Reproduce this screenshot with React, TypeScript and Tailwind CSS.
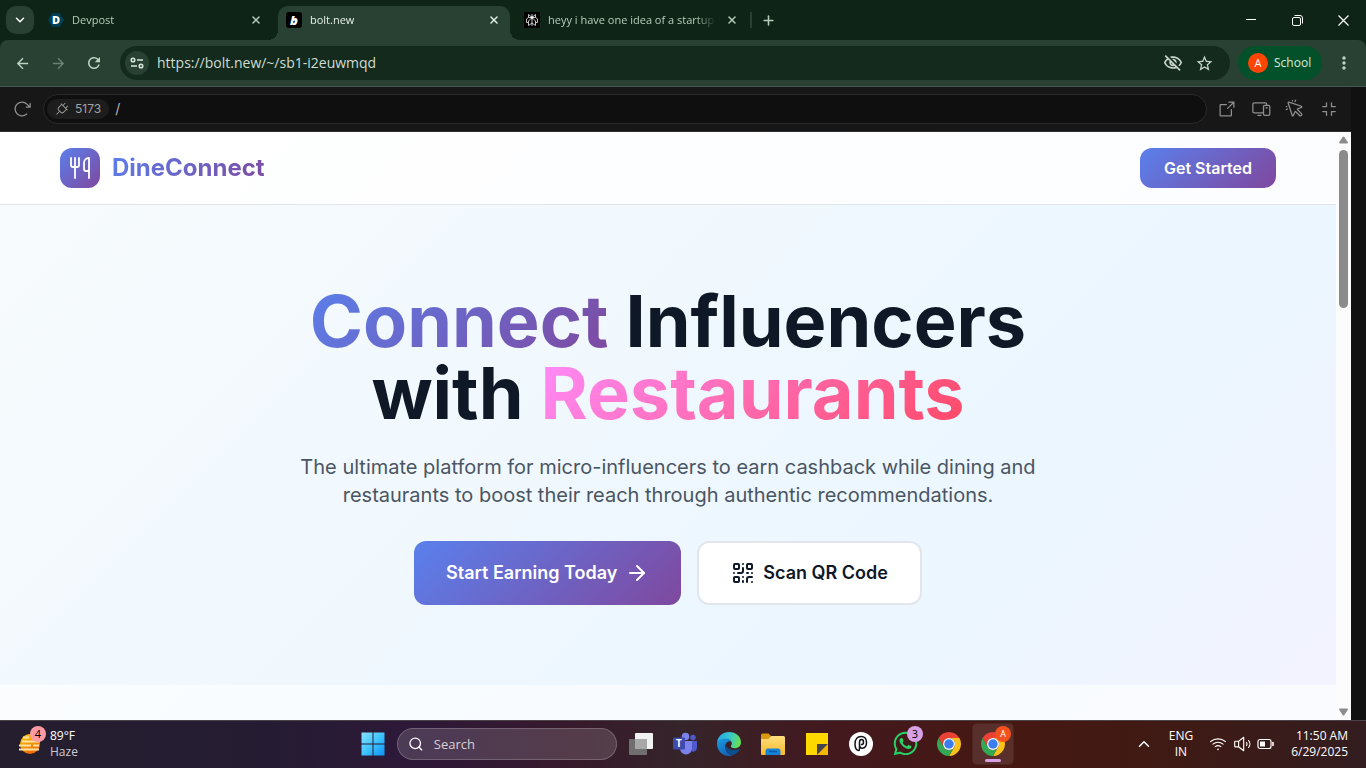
import { useState, type ReactNode } from 'react'
import clsx from 'clsx'
import { ArrowRight, ChevronDown, ChevronUp, Plus, QrCode, Search, Utensils, X } from 'lucide-react'
import {
  MdArrowBack,
  MdArrowForward,
  MdMoreVert,
  MdOutlineVisibilityOff,
  MdRefresh,
  MdStarBorder
} from 'react-icons/md'
import {
  PiArrowClockwise,
  PiArrowSquareOut,
  PiCornersIn,
  PiCursorClick,
  PiDevices,
  PiPlug,
  PiSpeakerHigh,
  PiWifiHigh
} from 'react-icons/pi'
import { FaWhatsapp } from 'react-icons/fa'

interface Tab {
  id: string
  title: string
  icon: ReactNode
}

const tabs: Tab[] = [
  { id: 'devpost', title: 'Devpost', icon: <DevpostIcon /> },
  { id: 'bolt', title: 'bolt.new', icon: <BoltIcon /> },
  { id: 'chat', title: 'heyy i have one idea of a startup', icon: <ChatIcon /> }
]

export default function App() {
  return (
    <div className="flex min-h-screen flex-col bg-[#111111] font-['Open_Sans','Noto_Sans',sans-serif]">
      <TabStrip />
      <Toolbar />
      <main className="flex flex-1">
        <div className="flex min-w-0 flex-1 flex-col">
          <PreviewBar />
          <div className="flex flex-1">
            <DineConnectPage />
            <Scrollbar />
          </div>
        </div>
        <div className="w-[15px] bg-[#111111]" />
      </main>
      <Taskbar />
    </div>
  )
}

// ============================================================================
// BROWSER
// ============================================================================

function TabStrip() {
  const [active, setActive] = useState('bolt')

  return (
    <header className="flex h-10 bg-[#0e2417] text-[11px] text-[#b5ccba]">
      <button
        aria-label="Search tabs"
        className="my-auto ml-1.5 flex size-7 items-center justify-center rounded-[10px] bg-[#294132] text-white"
      >
        <ChevronDown size={14} strokeWidth={2.5} />
      </button>

      <div className="flex gap-1.5 pl-1.5">
        {tabs.map((tab) => {
          const isActive = tab.id === active
          return (
            <div
              key={tab.id}
              className={clsx(
                'relative mt-1.5 flex w-[232px] items-center rounded-t-[10px] px-2 pb-1.5',
                isActive && 'bg-[#294132] text-[#e3f0e6]'
              )}
            >
              {isActive && (
                <>
                  <span className="absolute bottom-0 -left-2.5 size-2.5 bg-[radial-gradient(circle_at_0_0,#0e2417_10px,#294132_10px)]" />
                  <span className="absolute -right-2.5 bottom-0 size-2.5 bg-[radial-gradient(circle_at_100%_0,#0e2417_10px,#294132_10px)]" />
                </>
              )}
              <button
                onClick={() => setActive(tab.id)}
                className="flex min-w-0 flex-1 items-center gap-2 text-left"
              >
                {tab.icon}
                <span className="flex-1 overflow-hidden whitespace-nowrap [mask-image:linear-gradient(to_right,black_88%,transparent)]">
                  {tab.title}
                </span>
              </button>
              <button aria-label={`Close ${tab.title}`} className="ml-2 flex size-4 items-center justify-center">
                <X size={12} strokeWidth={3} />
              </button>
            </div>
          )
        })}
      </div>

      <div className="my-auto ml-0.5 h-4 w-0.5 bg-[#294132]" />
      <button aria-label="New tab" className="ml-1 flex w-6 items-center justify-center">
        <Plus size={15} strokeWidth={2.5} />
      </button>

      <div className="ml-auto flex text-white">
        <button aria-label="Minimize" className="flex w-[46px] items-center justify-center">
          <svg width="10" height="10" viewBox="0 0 10 10" stroke="currentColor">
            <path d="M0 4.5h10" />
          </svg>
        </button>
        <button aria-label="Restore" className="flex w-[46px] items-center justify-center">
          <svg width="11" height="11" viewBox="0 0 11 11" fill="none" stroke="currentColor">
            <rect x="0.5" y="2.5" width="8" height="8" rx="1.5" />
            <path d="M2.5 .5h5.5a2.5 2.5 0 0 1 2.5 2.5v5.5" />
          </svg>
        </button>
        <button aria-label="Close" className="flex w-[46px] items-center justify-center">
          <svg width="11" height="11" viewBox="0 0 11 11" stroke="currentColor" strokeWidth="1.2">
            <path d="M.5 .5l10 10M10.5 .5l-10 10" />
          </svg>
        </button>
      </div>
    </header>
  )
}

function Toolbar() {
  return (
    <div className="bg-[#0e2417]">
      <nav className="flex h-[47px] items-center rounded-t-lg border-b border-[#43594b] bg-[#294132] pl-1 text-[#bdd3c2]">
        <ToolbarButton label="Back">
          <MdArrowBack size={17} />
        </ToolbarButton>
        <ToolbarButton label="Forward" disabled>
          <MdArrowForward size={17} />
        </ToolbarButton>
        <ToolbarButton label="Reload">
          <MdRefresh size={18} />
        </ToolbarButton>

        <div className="ml-2 flex h-[34px] flex-1 items-center rounded-full bg-[#132a1d] pr-[15px] pl-[5px]">
          <button
            aria-label="Site information"
            className="flex size-6 items-center justify-center rounded-full bg-[#294132] text-[#dbe8de]"
          >
            <svg width="14" height="12" viewBox="0 0 14 12" fill="none" stroke="currentColor" strokeWidth="1.5">
              <circle cx="3" cy="3" r="1.8" />
              <path d="M7 3h6M1 9h6" />
              <circle cx="11" cy="9" r="1.8" />
            </svg>
          </button>
          <input
            aria-label="Address"
            defaultValue="https://bolt.new/~/sb1-i2euwmqd"
            className="ml-2 min-w-0 flex-1 bg-transparent text-sm text-[#cfdcd2] outline-none"
          />
          <div className="flex gap-3 text-[#c5d2c8]">
            <button aria-label="Third-party cookies blocked">
              <MdOutlineVisibilityOff size={20} />
            </button>
            <button aria-label="Bookmark this tab" className="w-5">
              <MdStarBorder size={19} />
            </button>
          </div>
        </div>

        <button className="ml-2 flex h-[34px] w-[84px] items-center gap-1.5 rounded-full bg-[#03512b] pl-2.5 text-xs text-[#d5ecd9]">
          <span className="flex size-5 items-center justify-center rounded-full bg-[#ff4500] text-[11px] text-white">
            A
          </span>
          School
        </button>
        <button aria-label="Menu" className="flex w-11 justify-center">
          <MdMoreVert size={20} />
        </button>
      </nav>
    </div>
  )
}

function ToolbarButton({
  label,
  disabled,
  children
}: {
  label: string
  disabled?: boolean
  children: ReactNode
}) {
  return (
    <button
      aria-label={label}
      disabled={disabled}
      className={clsx('flex h-9 w-9 items-center justify-center', disabled && 'text-[#6b8073]')}
    >
      {children}
    </button>
  )
}

function PreviewBar() {
  return (
    <div className="flex h-[45px] items-center border-b border-[#2e2e2e] bg-[#171717] pr-[5px] text-[#8f8f8f]">
      <button aria-label="Reload preview" className="flex w-[43px] justify-center">
        <PiArrowClockwise size={20} />
      </button>
      <div className="flex h-[30px] flex-1 items-center rounded-full border border-[#2a2a2a] bg-[#0f0f0f] pl-[3px]">
        <button className="flex h-5 items-center gap-1.5 rounded-full bg-[#1d1d1d] pr-2 pl-2 font-[Inter,sans-serif] text-xs text-[#a3a3a3]">
          <PiPlug size={14} />
          5173
        </button>
        <input
          aria-label="Preview path"
          defaultValue="/"
          className="ml-1.5 min-w-0 flex-1 bg-transparent font-[Inter,sans-serif] text-sm text-[#b5b5b5] outline-none"
        />
      </div>
      <div className="ml-[3px] flex">
        <PreviewAction label="Open in new tab">
          <PiArrowSquareOut size={20} />
        </PreviewAction>
        <PreviewAction label="Device size">
          <PiDevices size={20} />
        </PreviewAction>
        <PreviewAction label="Inspect element">
          <PiCursorClick size={20} />
        </PreviewAction>
        <PreviewAction label="Exit full screen">
          <PiCornersIn size={20} />
        </PreviewAction>
      </div>
    </div>
  )
}

function PreviewAction({ label, children }: { label: string; children: ReactNode }) {
  return (
    <button aria-label={label} className="flex w-[34px] justify-center">
      {children}
    </button>
  )
}

function Scrollbar() {
  return (
    <div className="flex w-[15px] flex-col items-center bg-[#fcfcfc] py-1">
      <svg width="9" height="8" viewBox="0 0 9 8" fill="#8b8b8b">
        <path d="M3.700 1a1 1 0 0 1 1.600 0L9 6.500a1 1 0 0 1-1 1H1a1 1 0 0 1-1-1z" />
      </svg>
      <div className="mt-1.5 h-[158px] w-[9px] rounded-full bg-[#8b8b8b]" />
      <svg className="mt-auto" width="9" height="8" viewBox="0 0 9 8" fill="#8b8b8b">
        <path d="M5.300 7a1 1 0 0 1-1.600 0L0 1.500a1 1 0 0 1 1-1h7a1 1 0 0 1 1 1z" />
      </svg>
    </div>
  )
}

// ============================================================================
// DINECONNECT LANDING PAGE
// ============================================================================

function DineConnectPage() {
  return (
    <div className="flex-1 bg-[linear-gradient(135deg,#fefefe,#f8fcff_50%,#f9fbff)] font-[Inter,sans-serif]">
      <div className="border-b border-[#e2e6ec] bg-[linear-gradient(135deg,#ffffff,#fcfdff)]">
        <div className="mx-auto flex max-w-7xl items-center justify-between px-8 py-4">
          <a href="#" className="flex items-center gap-3">
            <span className="flex size-10 items-center justify-center rounded-xl bg-[linear-gradient(135deg,#5a80ec,#7f489e)] text-white">
              <Utensils size={24} strokeWidth={1.8} />
            </span>
            <span className="bg-[linear-gradient(135deg,#5a80ec,#7f489e)] bg-clip-text text-2xl font-bold text-transparent">
              DineConnect
            </span>
          </a>
          <button className="rounded-xl bg-[linear-gradient(135deg,#5a80ec,#7f489e)] px-6 py-2 font-semibold text-white">
            Get Started
          </button>
        </div>
      </div>

      <section className="bg-[linear-gradient(135deg,#f7fbfd,#ebf6ff_73%,#f3f3ff)] px-8 py-20 text-center">
        <h1 className="mx-auto mb-6 max-w-4xl text-[72px] leading-[72px] font-bold text-[#0f1826]">
          <span className="bg-[linear-gradient(135deg,#5a80ec,#7f489e)] bg-clip-text text-transparent">
            Connect
          </span>{' '}
          Influencers
          <br />
          with{' '}
          <span className="bg-[linear-gradient(135deg,#ff8cfb,#ff4864)] bg-clip-text text-transparent">
            Restaurants
          </span>
        </h1>
        <p className="mx-auto mb-8 max-w-3xl text-xl text-[#4a5563]">
          The ultimate platform for micro-influencers to earn cashback while dining and restaurants
          to boost their reach through authentic recommendations.
        </p>
        <div className="flex justify-center gap-4">
          <button className="flex items-center gap-2 rounded-xl bg-[linear-gradient(135deg,#5a80ec,#7f489e)] px-8 text-lg font-semibold text-white">
            Start Earning Today
            <ArrowRight size={24} />
          </button>
          <button className="flex items-center gap-2 rounded-xl border-2 border-[#e2e6ec] bg-white px-8 py-4 text-lg font-semibold text-[#0f1826]">
            <QrCode size={24} />
            Scan QR Code
          </button>
        </div>
      </section>
    </div>
  )
}

// ============================================================================
// TASKBAR
// ============================================================================

function Taskbar() {
  return (
    <footer className="flex h-12 items-center border-t border-[#4b4347] bg-[linear-gradient(to_right,#241e2e,#251c33_20%,#2e1838_31%,#371a2b_42%,#35242a_50%,#42191f_60%,#461812_74%,#3f1a14_86%,#331d20)] pb-0.5 text-xs leading-4 text-white">
      <div className="flex flex-1">
        <button className="ml-[18px] flex items-center gap-2 text-left">
          <span className="relative">
            <HazeIcon />
            <span className="absolute -top-1.5 -right-1 flex size-4 items-center justify-center rounded-full bg-[#ff99a4] text-[11px] text-black">
              4
            </span>
          </span>
          <span>
            <span className="block">89°F</span>
            <span className="block text-[#cfc9cf]">Haze</span>
          </span>
        </button>
      </div>

      <div className="flex items-center gap-1">
        <TaskbarItem label="Start">
          <StartIcon />
        </TaskbarItem>
        <label className="flex h-8 w-[220px] items-center gap-2.5 rounded-full border border-white/20 bg-white/15 pl-2.5">
          <Search size={18} strokeWidth={2} />
          <input
            aria-label="Search"
            placeholder="Search"
            className="w-full bg-transparent text-[13px] outline-none placeholder:text-[#d8d0d6]"
          />
        </label>
        <TaskbarItem label="Task view">
          <TaskViewIcon />
        </TaskbarItem>
        <TaskbarItem label="Teams">
          <TeamsIcon />
        </TaskbarItem>
        <TaskbarItem label="Edge">
          <EdgeIcon />
        </TaskbarItem>
        <TaskbarItem label="File Explorer">
          <FolderIcon />
        </TaskbarItem>
        <TaskbarItem label="Sticky Notes">
          <NotesIcon />
        </TaskbarItem>
        <TaskbarItem label="Pi">
          <PiAppIcon />
        </TaskbarItem>
        <TaskbarItem label="WhatsApp">
          <FaWhatsapp size={27} color="#25d366" />
          <span className="absolute top-0.5 right-0.5 flex size-4 items-center justify-center rounded-full bg-[#d9a0e6] text-[11px] text-black">
            3
          </span>
        </TaskbarItem>
        <TaskbarItem label="Chrome">
          <ChromeIcon />
        </TaskbarItem>
        <TaskbarItem label="Chrome, School profile" active>
          <ChromeIcon />
          <span className="absolute top-0.5 right-0.5 flex size-4 items-center justify-center rounded-full bg-[#f4511e] text-[9px] text-white">
            A
          </span>
        </TaskbarItem>
      </div>

      <div className="flex flex-1 items-center justify-end">
        <button aria-label="Show hidden icons" className="mr-4">
          <ChevronUp size={18} />
        </button>
        <button className="mr-4 text-center">
          ENG
          <br />
          IN
        </button>
        <button aria-label="Network, volume and battery" className="flex items-center gap-1.5">
          <PiWifiHigh size={18} />
          <PiSpeakerHigh size={18} />
          <svg width="18" height="12" viewBox="0 0 18 12" fill="none" stroke="white" strokeWidth="1.2">
            <rect x="1" y="1.500" width="13" height="9" rx="2" />
            <rect x="3" y="3.500" width="5" height="5" fill="white" stroke="none" />
            <path d="M16 4.500v3" strokeWidth="1.600" strokeLinecap="round" />
          </svg>
        </button>
        <button className="mr-[18px] ml-4 text-right">
          11:50 AM
          <br />
          6/29/2025
        </button>
      </div>
    </footer>
  )
}

function TaskbarItem({
  label,
  active,
  children
}: {
  label: string
  active?: boolean
  children: ReactNode
}) {
  return (
    <button
      aria-label={label}
      className={clsx(
        'relative flex size-10 items-center justify-center rounded',
        active && 'bg-white/10 ring-1 ring-white/5'
      )}
    >
      {children}
      {active && <span className="absolute bottom-0.5 h-[3px] w-4 rounded-full bg-[#d9a0e6]" />}
    </button>
  )
}

// ============================================================================
// ICONS
// ============================================================================

function DevpostIcon() {
  return (
    <svg width="16" height="16" viewBox="0 0 16 16">
      <path d="M4.200 1h7.600L16 8l-4.200 7H4.200L0 8z" fill="#003e54" />
      <text x="8" y="12" textAnchor="middle" fontSize="11" fontWeight="800" fill="white">
        D
      </text>
    </svg>
  )
}

function BoltIcon() {
  return (
    <svg width="16" height="16" viewBox="0 0 16 16">
      <rect width="16" height="16" rx="3" fill="black" />
      <text x="8" y="12.500" textAnchor="middle" fontSize="13" fontWeight="800" fontStyle="italic" fill="white">
        b
      </text>
    </svg>
  )
}

function ChatIcon() {
  return (
    <svg width="16" height="16" viewBox="0 0 16 16" fill="none" stroke="#d8d8d8" strokeWidth="0.900">
      <rect width="16" height="16" fill="black" stroke="none" />
      <path d="M8 2v12M4.500 2.500v3h7v-3L8 5.500zM4.500 5.500L2.500 7v3.500h2M11.500 5.500l2 1.500v3.500h-2M8 5.500L4.500 9v4.500L8 11l3.500 2.500V9z" />
      <circle cx="8" cy="5.500" r="1.200" fill="#ffffff" stroke="none" />
    </svg>
  )
}

function HazeIcon() {
  return (
    <svg width="24" height="24" viewBox="0 0 24 24">
      <defs>
        <linearGradient id="haze" x1="0" y1="0" x2="0.500" y2="1">
          <stop stopColor="#ffd000" />
          <stop offset="1" stopColor="#f06a00" />
        </linearGradient>
      </defs>
      <circle cx="12" cy="12" r="10" fill="url(#haze)" />
      <path
        d="M5 5.500h6M4 9.500h18M1 13.500h12M15 13.500h6M1 17.500h20"
        stroke="#fbe3a4"
        strokeWidth="1.800"
      />
    </svg>
  )
}

function StartIcon() {
  return (
    <svg width="24" height="24" viewBox="0 0 24 24">
      <defs>
        <linearGradient id="start" gradientUnits="userSpaceOnUse" x1="0" y1="0" x2="24" y2="24">
          <stop stopColor="#8be3ff" />
          <stop offset="0.500" stopColor="#3fc4ff" />
          <stop offset="1" stopColor="#0a90f5" />
        </linearGradient>
      </defs>
      <path d="M.5.500h11v11H.5zM12.500.500h11v11h-11zM.5 12.500h11v11H.5zM12.500 12.500h11v11h-11z" fill="url(#start)" />
    </svg>
  )
}

function TaskViewIcon() {
  return (
    <svg width="24" height="24" viewBox="0 0 24 24">
      <rect x="6" y="1" width="18" height="16" rx="1" fill="#f2f2f2" />
      <rect y="7" width="18" height="16" rx="1" fill="#6f6f6f" />
      <path d="M6 7h12v10H6z" fill="#a8a8a8" />
    </svg>
  )
}

function TeamsIcon() {
  return (
    <svg width="24" height="24" viewBox="0 0 24 24">
      <circle cx="20" cy="5.500" r="2.700" fill="#5059c9" />
      <path d="M16 9h8v6.500a4 4 0 0 1-5 4z" fill="#5059c9" />
      <circle cx="12.500" cy="4.500" r="3.800" fill="#7b83eb" />
      <path d="M7 9h12v7.500a6 6 0 0 1-12 0z" fill="#7b83eb" />
      <rect y="5.500" width="12" height="12" rx="1" fill="#4049ad" />
      <text x="6" y="15" textAnchor="middle" fontSize="10" fontWeight="700" fill="white">
        T
      </text>
    </svg>
  )
}

function EdgeIcon() {
  return (
    <svg width="24" height="24" viewBox="0 0 24 24">
      <defs>
        <linearGradient id="edge-top" x1="0" y1="0.300" x2="1" y2="0.500">
          <stop stopColor="#2aa8e8" />
          <stop offset="0.500" stopColor="#35c6d0" />
          <stop offset="1" stopColor="#6be04f" />
        </linearGradient>
        <linearGradient id="edge-left" x1="0" y1="0" x2="0.500" y2="1">
          <stop stopColor="#1b9de2" />
          <stop offset="1" stopColor="#1463b8" />
        </linearGradient>
      </defs>
      <path d="M0 11C.5 4.500 5.600 0 12 0c7 0 12 4.800 12 10.300 0 3.700-2.800 6-6 6-2.600 0-4.200-1-4.200-2 0-.7 1-1.200 1-3C14.800 9 12.300 7 8.800 7 4.500 7 1.200 9 0 11z" fill="url(#edge-top)" />
      <path d="M0 11C1.200 8.200 4.500 6.500 8.200 6.500c3.300 0 5.600 1.600 6.300 3.500-1-.7-2-.9-3-.6-2.600.9-4 3.800-3.200 7 .9 3.800 4 6.300 7.500 6.700C14.600 23.700 13.300 24 12 24 5 24-.4 18 0 11z" fill="url(#edge-left)" />
      <path d="M8.300 13c-1 5 3.200 9.500 7.500 10.100 3-1 5.700-3.100 7-5.700.2-.5-.2-.8-.7-.5-4.600 2.400-11.500 1-13.800-3.900z" fill="#0c4f8f" />
    </svg>
  )
}

function FolderIcon() {
  return (
    <svg width="24" height="24" viewBox="0 0 24 24">
      <defs>
        <linearGradient id="folder" x1="0" y1="0" x2="0" y2="1">
          <stop stopColor="#ffdf7d" />
          <stop offset="1" stopColor="#f9b92b" />
        </linearGradient>
      </defs>
      <path d="M0 3a1.500 1.500 0 0 1 1.500-1.500h6L10 4h-.5v4H0z" fill="#dc9a10" />
      <path d="M0 7h7.500L10 4h12.500A1.500 1.500 0 0 1 24 5.500V22a1 1 0 0 1-1 1H1a1 1 0 0 1-1-1z" fill="url(#folder)" />
      <path d="M4.500 23v-4a2.500 2.500 0 0 1 2.500-2.500h10a2.500 2.500 0 0 1 2.500 2.500v4z" fill="#1583d8" />
      <path d="M8 19.500h8" stroke="#0a5ba6" strokeWidth="1.500" />
    </svg>
  )
}

function NotesIcon() {
  return (
    <svg width="22" height="22" viewBox="0 0 22 22">
      <path d="M0 0h22v11L11 22H0z" fill="#ffd800" />
      <path d="M11 11h11L11 22z" fill="#44444a" />
      <path d="M22 11v11H11z" fill="#f2b800" />
    </svg>
  )
}

function PiAppIcon() {
  return (
    <svg width="24" height="24" viewBox="0 0 24 24">
      <circle cx="12" cy="12" r="12" fill="white" />
      <path
        d="M9.500 18.500C7 18 6 15.500 6 12c0-4.500 2.400-7.500 6-7.500 3.500 0 5.500 2.200 5.500 5.800 0 3.700-1.800 5.900-4.200 5.900-2 0-2.800-1.400-2.800-3.700v-2.300c0-1.800.7-2.700 2-2.700s2 .9 2 2.500-.7 2.600-2 2.600M10.500 12v4.500c0 1.300-.3 2-1 2"
        fill="none"
        stroke="#111"
        strokeWidth="1.500"
        strokeLinecap="round"
      />
    </svg>
  )
}

function ChromeIcon() {
  return (
    <svg width="24" height="24" viewBox="2 2 44 44">
      <path d="M4.950 13A22 22 0 0 1 43.050 13H24A11 11 0 0 0 14.470 29.500z" fill="#ea4335" />
      <path d="M43.050 13A22 22 0 0 1 24 46l9.530-16.500A11 11 0 0 0 24 13z" fill="#fbc116" />
      <path d="M24 46A22 22 0 0 1 4.950 13l9.520 16.500a11 11 0 0 0 19.060 0z" fill="#34a853" />
      <circle cx="24" cy="24" r="11" fill="white" />
      <circle cx="24" cy="24" r="8.700" fill="#3b7ded" />
    </svg>
  )
}
